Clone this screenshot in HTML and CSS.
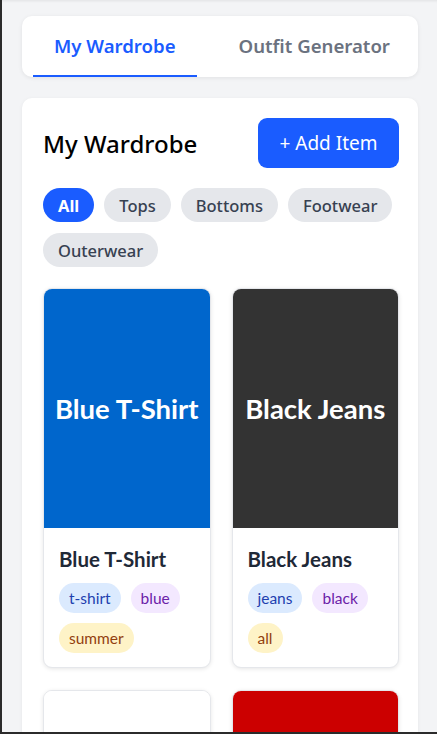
FILE: index.html
```html
<!DOCTYPE html>
<html lang="en">
<head>
<meta charset="utf-8">
<title>My Wardrobe</title>
<link rel="stylesheet" href="styles.css">
</head>
<body>
<div class="frame">
  <nav class="tabs">
    <button class="tab active">My Wardrobe</button>
    <button class="tab">Outfit Generator</button>
  </nav>

  <main class="panel">
    <header class="panel-head">
      <h1 class="title">My Wardrobe</h1>
      <button class="add-btn">+ Add Item</button>
    </header>

    <div class="filters">
      <button class="chip active">All</button>
      <button class="chip">Tops</button>
      <button class="chip">Bottoms</button>
      <button class="chip">Footwear</button>
      <button class="chip">Outerwear</button>
    </div>

    <div class="grid">
      <article class="item">
        <div class="thumb thumb-blue">Blue T-Shirt</div>
        <div class="item-body">
          <h3 class="item-name">Blue T-Shirt</h3>
          <div class="tags">
            <span class="tag tag-type">t-shirt</span>
            <span class="tag tag-color">blue</span>
            <span class="tag tag-season">summer</span>
          </div>
        </div>
      </article>
      <article class="item">
        <div class="thumb thumb-black">Black Jeans</div>
        <div class="item-body">
          <h3 class="item-name">Black Jeans</h3>
          <div class="tags">
            <span class="tag tag-type">jeans</span>
            <span class="tag tag-color">black</span>
            <span class="tag tag-season">all</span>
          </div>
        </div>
      </article>
      <article class="item">
        <div class="thumb thumb-white">White Sneakers</div>
        <div class="item-body">
          <h3 class="item-name">White Sneakers</h3>
        </div>
      </article>
      <article class="item">
        <div class="thumb thumb-red">Red Jacket</div>
        <div class="item-body">
          <h3 class="item-name">Red Jacket</h3>
        </div>
      </article>
    </div>
  </main>
</div>
</body>
</html>
```
FILE: styles.css
```css
* { box-sizing: border-box; }

html, body {
  margin: 0;
  height: 100%;
  overflow: hidden;
}

body {
  background: #f3f4f6;
  font-family: "Noto Sans", "Open Sans", sans-serif;
}

body::after {
  content: "";
  position: fixed;
  left: 0;
  right: 0;
  bottom: 0;
  height: 2px;
  background: #2b2b2b;
}

.frame {
  min-height: 100%;
  border-left: 2px solid #2b2b2b;
  padding: 16px 19px 0 20px;
  box-shadow: inset 0 3px 3px -2px rgba(0,0,0,0.08);
}

.tabs {
  display: flex;
  gap: 21px;
  padding: 0 11px;
  background: #fff;
  border-radius: 10px;
  box-shadow: 0 1px 4px rgba(0,0,0,0.08);
}

.tab {
  border: 0;
  background: none;
  font-family: inherit;
  font-size: 18.6px;
  font-weight: 600;
  color: #6b7280;
  padding: 18px 21px 17px;
  line-height: 24px;
  border-bottom: 2px solid transparent;
  cursor: pointer;
  white-space: nowrap;
}

.tab.active {
  color: #1a5cff;
  border-bottom-color: #1a5cff;
}

.panel {
  margin-top: 21px;
  background: #fff;
  border-radius: 10px;
  padding: 20px 19px 20px 21px;
  box-shadow: 0 1px 4px rgba(0,0,0,0.06);
  min-height: 700px;
}

.panel-head {
  display: flex;
  justify-content: space-between;
  align-items: center;
}

.title {
  margin: 0;
  font-size: 24px;
  font-weight: 500;
  color: #000;
}

.add-btn {
  width: 141px;
  height: 50px;
  border: 0;
  border-radius: 9px;
  background: #1a5cff;
  color: #fff;
  font-family: inherit;
  font-size: 19px;
  font-weight: 400;
}

.filters {
  display: flex;
  flex-wrap: wrap;
  gap: 11px 10px;
  margin-top: 20px;
}

.chip {
  height: 34px;
  padding: 0 15px;
  border: 0;
  border-radius: 17px;
  background: #e5e7eb;
  color: #374151;
  font-family: inherit;
  font-size: 16.5px;
  font-weight: 500;
}

.chip.active {
  background: #1a5cff;
  color: #fff;
  font-weight: 700;
}

.grid {
  display: grid;
  grid-template-columns: 1fr 1fr;
  gap: 22px 21px;
  margin-top: 21px;
}

.item {
  border: 1px solid #e5e7eb;
  border-radius: 9px;
  overflow: hidden;
  background: #fff;
  box-shadow: 0 1px 4px rgba(0,0,0,0.10);
  font-family: Lato, sans-serif;
}

.thumb {
  height: 240px;
  display: flex;
  align-items: center;
  justify-content: center;
  color: #fff;
  font-size: 27.5px;
  font-weight: 700;
  margin: -1px -1px 0;
  white-space: nowrap;
}

.thumb-blue { background: #0066cc; }
.thumb-black { background: #333333; }
.thumb-white { background: #ffffff; color: #fff; }
.thumb-red { background: #cc0000; }

.item-body {
  padding: 17px 15px 14px;
}

.item-name {
  margin: 0;
  font-size: 20.5px;
  font-weight: 700;
  color: #1f2937;
  line-height: 28px;
}

.tags {
  display: flex;
  flex-wrap: wrap;
  gap: 10px;
  margin-top: 10px;
}

.tag {
  height: 30px;
  line-height: 30px;
  padding: 0 10px;
  border-radius: 15px;
  font-size: 15.5px;
}

.tag-type { background: #dbeafe; color: #1e40af; }
.tag-color { background: #f3e8ff; color: #6b21a8; }
.tag-season { background: #fef3c7; color: #92400e; }
```
